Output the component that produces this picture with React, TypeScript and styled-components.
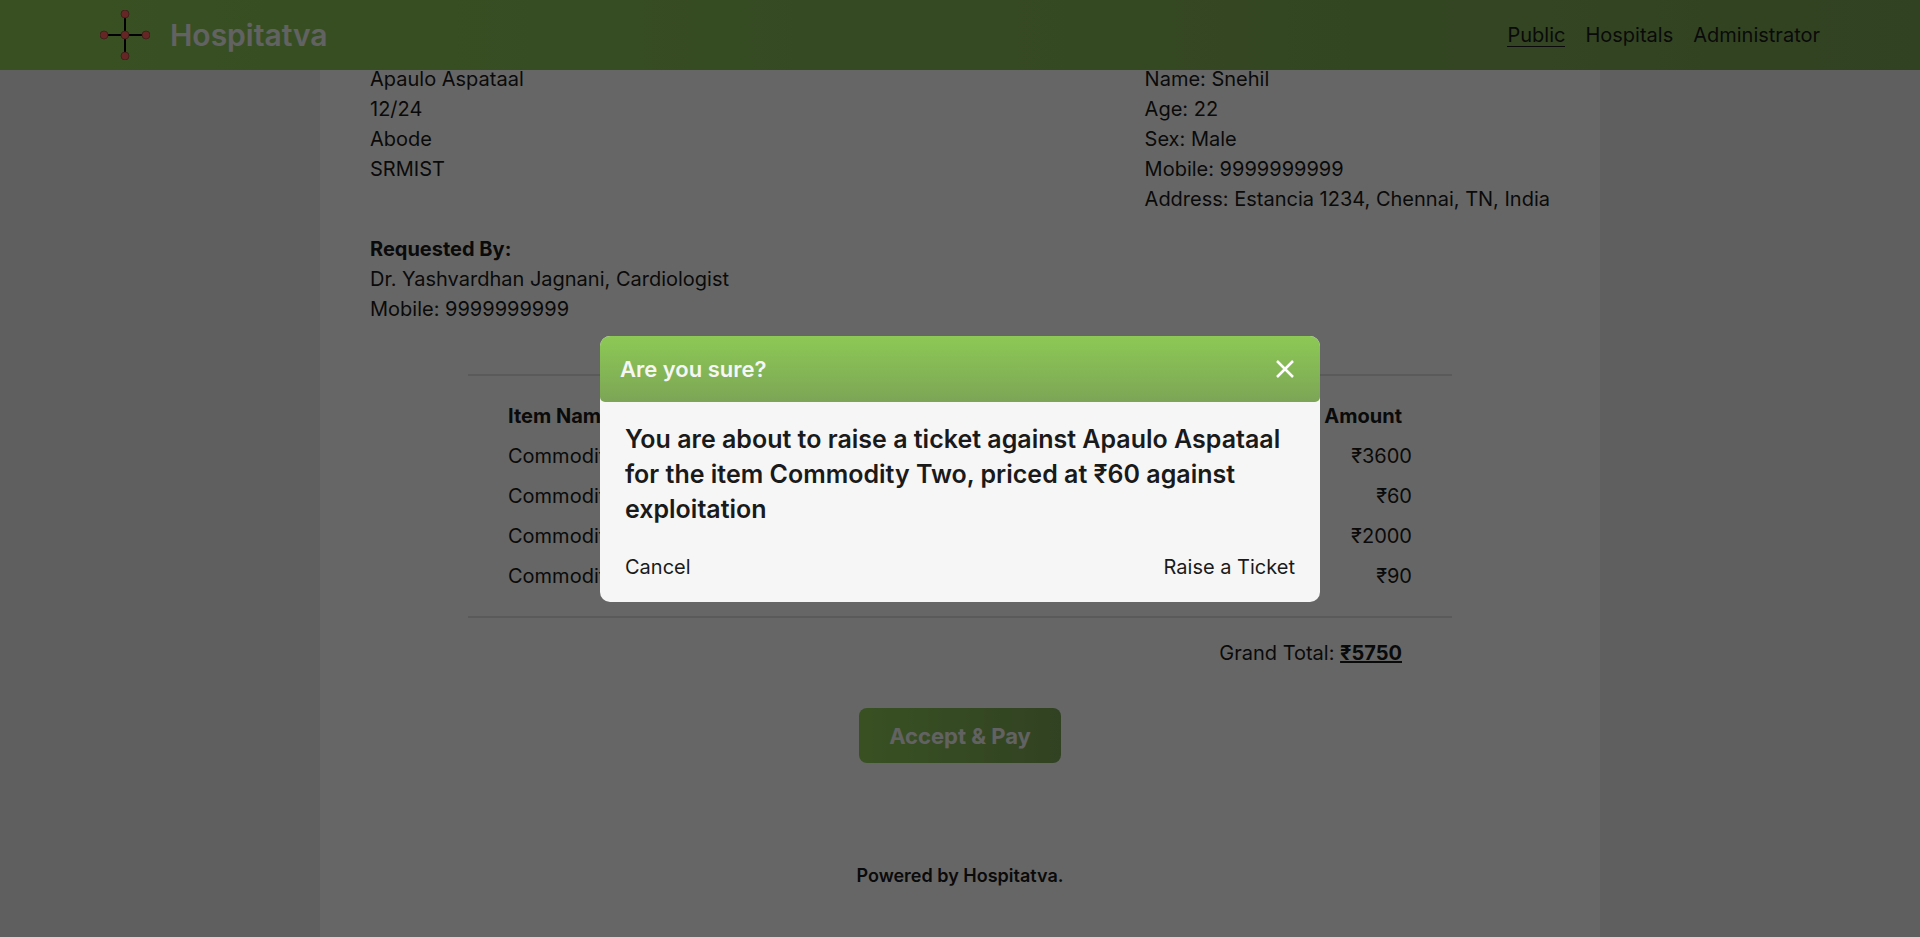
import React from "react";
import styled, { createGlobalStyle } from "styled-components";

const GlobalStyle = createGlobalStyle`
  *, *::before, *::after { box-sizing: border-box; }
  body {
    margin: 0;
    background: #eeeeee;
    color: #1a1a1a;
    font-family: Inter, "Liberation Sans", sans-serif;
    font-size: 20px;
    font-weight: 400;
    line-height: 30px;
    overflow: hidden;
  }
  p, h1, h2 { margin: 0; }
  button { font: inherit; color: inherit; border: 0; background: none; padding: 0; cursor: pointer; }
`;

const Header = styled.header`
  position: fixed;
  inset: 0 0 auto 0;
  height: 70px;
  padding: 0 100px;
  display: flex;
  align-items: center;
  justify-content: space-between;
  background: linear-gradient(to right, #8dc955, #7ca556);
`;

const Brand = styled.a`
  display: flex;
  align-items: center;
  gap: 20px;
  color: #f6f6f6;
  font-size: 30px;
  font-weight: 600;
  text-decoration: none;
`;

const Nav = styled.nav`
  display: flex;
  gap: 20px;
`;

const NavLink = styled.a<{ $active?: boolean }>`
  color: inherit;
  line-height: 22px;
  text-decoration: none;
  border-bottom: 1px solid ${(p) => (p.$active ? "currentColor" : "transparent")};
`;

const Sheet = styled.main`
  width: calc(100% - 640px);
  min-height: calc(100vh - 64px);
  margin: 64px auto 0;
  padding: 0 50px;
  background: #ffffff;
`;

const Parties = styled.section`
  display: flex;
  justify-content: space-between;
`;

const Requester = styled.section`
  margin-top: 20px;
`;

const Strong = styled.strong`
  font-weight: 700;
`;

const Bill = styled.section`
  margin: 50px 98px 0;
  border: solid #e0e0e0;
  border-width: 2px 0;
  padding: 20px 40px;
`;

const ItemTable = styled.table`
  width: 100%;
  border-collapse: collapse;
  th, td { height: 40px; padding: 0; }
  th { font-weight: 700; text-align: left; }
  th:last-child { text-align: right; padding-right: 10px; }
  td:last-child { text-align: right; }
`;

const Total = styled.p`
  margin: 20px 148px 0;
  text-align: right;
`;

const TotalAmount = styled(Strong)`
  text-decoration: underline;
  text-decoration-thickness: 2px;
`;

const PayButton = styled.button`
  && {
    display: block;
    margin: 40px auto 0;
    padding: 0 30px;
    height: 55px;
    border-radius: 8px;
    color: #f6f6f6;
    font-size: 22px;
    font-weight: 700;
    background: linear-gradient(to right, #8dc955, #7ca556);
  }
`;

const Footer = styled.footer`
  margin-top: 98px;
  text-align: center;
  font-size: 18px;
  font-weight: 600;
`;

const Overlay = styled.div`
  position: fixed;
  inset: 0;
  display: flex;
  align-items: center;
  justify-content: center;
  background: rgba(0, 0, 0, 0.6);
`;

const Dialog = styled.section`
  width: 720px;
  border-radius: 10px;
  overflow: hidden;
  background: #f6f6f6;
`;

const DialogHeader = styled.header`
  height: 66px;
  padding: 0 20px;
  display: flex;
  align-items: center;
  justify-content: space-between;
  border-radius: 0 0 5px 5px;
  color: #f6f6f6;
  background: linear-gradient(to bottom, #8dc955, #7ca556);
`;

const DialogTitle = styled.h2`
  font-size: 22px;
  font-weight: 600;
`;

const CloseButton = styled.button`
  && {
    display: flex;
    padding: 5px;
    color: #ffffff;
  }
`;

const DialogBody = styled.div`
  padding: 20px 25px;
`;

const Message = styled.p`
  font-size: 25px;
  font-weight: 600;
  line-height: 35px;
`;

const Actions = styled.div`
  display: flex;
  justify-content: space-between;
  margin-top: 25px;
`;

const Logo = () => (
  <svg width="50" height="50" viewBox="0 0 50 50" aria-hidden="true">
    <path d="M25 5v40M5 25h40" stroke="#000" strokeWidth="2" />
    {[[25, 4], [4, 25], [25, 25], [46, 25], [25, 46]].map(([x, y]) => (
      <circle key={`${x}-${y}`} cx={x} cy={y} r="4" fill="#ff6060" stroke="#8a4a38" strokeWidth="0.8" />
    ))}
  </svg>
);

const items = [
  ["Commodity One", 3600],
  ["Commodity Two", 60],
  ["Commodity Three", 2000],
  ["Commodity Four", 90],
] as const;

export default function App() {
  return (
    <>
      <GlobalStyle />
      <Sheet>
        <Parties>
          <div>
            <p>Apaulo Aspataal</p>
            <p>12/24</p>
            <p>Abode</p>
            <p>SRMIST</p>
          </div>
          <div>
            <p>Name: Snehil</p>
            <p>Age: 22</p>
            <p>Sex: Male</p>
            <p>Mobile: 9999999999</p>
            <p>Address: Estancia 1234, Chennai, TN, India</p>
          </div>
        </Parties>
        <Requester>
          <p><Strong>Requested By:</Strong></p>
          <p>Dr. Yashvardhan Jagnani, Cardiologist</p>
          <p>Mobile: 9999999999</p>
        </Requester>
        <Bill>
          <ItemTable>
            <thead>
              <tr><th scope="col">Item Name</th><th scope="col">Amount</th></tr>
            </thead>
            <tbody>
              {items.map(([name, amount]) => (
                <tr key={name}><td>{name}</td><td>₹{amount}</td></tr>
              ))}
            </tbody>
          </ItemTable>
        </Bill>
        <Total>Grand Total: <TotalAmount>₹5750</TotalAmount></Total>
        <PayButton type="button">Accept &amp; Pay</PayButton>
        <Footer>Powered by Hospitatva.</Footer>
      </Sheet>
      <Header>
        <Brand href="#"><Logo />Hospitatva</Brand>
        <Nav>
          <NavLink href="#public" $active>Public</NavLink>
          <NavLink href="#hospitals">Hospitals</NavLink>
          <NavLink href="#administrator">Administrator</NavLink>
        </Nav>
      </Header>
      <Overlay>
        <Dialog role="dialog" aria-modal="true" aria-labelledby="dialog-title">
          <DialogHeader>
            <DialogTitle id="dialog-title">Are you sure?</DialogTitle>
            <CloseButton type="button" aria-label="Close">
              <svg width="20" height="20" viewBox="0 0 20 20" fill="none" stroke="currentColor" strokeWidth="2.5">
                <path d="M2 2l16 16M18 2l-16 16" />
              </svg>
            </CloseButton>
          </DialogHeader>
          <DialogBody>
            <Message>
              You are about to raise a ticket against Apaulo Aspataal for the item Commodity Two, priced at ₹60 against exploitation
            </Message>
            <Actions>
              <button type="button">Cancel</button>
              <button type="button">Raise a Ticket</button>
            </Actions>
          </DialogBody>
        </Dialog>
      </Overlay>
    </>
  );
}
